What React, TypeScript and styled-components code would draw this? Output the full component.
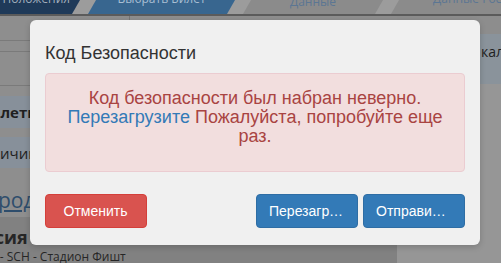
import React from "react";
import styled, { createGlobalStyle, css } from "styled-components";

const GlobalStyle = createGlobalStyle`
  html, body { margin: 0; padding: 0; }
  body {
    width: 501px;
    height: 263px;
    overflow: hidden;
    font-family: "Open Sans", "Liberation Sans", Arial, sans-serif;
  }
  * { box-sizing: border-box; }
`;

const Page = styled.div`
  position: relative;
  width: 501px;
  height: 263px;
  overflow: hidden;
  background: #8e8e8e;
`;

/* the site is wider than the window: its frame begins left of the viewport */
const SiteFrame = styled.div`
  width: 600px;
  height: 100%;
  margin-left: -40px;
  display: flex;
  flex-direction: column;
`;

const Navbar = styled.nav`
  flex: none;
  height: 16px;
  display: flex;
  background: #9c9c9c;
  border-bottom: 2px solid #5b5b5b;
  overflow: hidden;
`;

type NavTone = "navy" | "blue" | "idle";

const toneBg: Record<NavTone, string> = {
  navy: "#1f3a59",
  blue: "#38668f",
  idle: "#8b8b8b",
};
const toneFg: Record<NavTone, string> = {
  navy: "#a3afbd",
  blue: "#a9bfd3",
  idle: "#5b7693",
};

const NavItem = styled.div<{
  $tone: NavTone;
  $w: number;
  $justify?: string;
  $pad?: string;
  $drop?: number;
}>`
  flex: none;
  width: ${(p) => p.$w}px;
  height: 14px;
  margin-right: 8px;
  display: flex;
  align-items: flex-end;
  justify-content: ${(p) => p.$justify || "center"};
  padding: ${(p) => p.$pad || "0"};
  padding-bottom: ${(p) => 7 - (p.$drop || 0)}px;
  background: ${(p) => toneBg[p.$tone]};
  color: ${(p) => toneFg[p.$tone]};
  clip-path: polygon(8px 0, 100% 0, calc(100% - 8px) 100%, 0 100%);
  font-size: 12px;
  line-height: 16px;
  white-space: nowrap;
`;

const Body = styled.div`
  flex: 1;
  display: flex;
  min-height: 0;
`;

const Main = styled.div`
  flex: none;
  width: 437px;
  display: flex;
  flex-direction: column;
`;

const TableRow = styled.div<{ $h: number }>`
  flex: none;
  height: ${(p) => p.$h}px;
  border-bottom: 1px solid #7a7a7a;
  display: flex;
`;

const TableCell = styled.div`
  width: 170px;
  border-right: 1px solid #767676;
`;

const InfoPanel = styled.div<{ $h: number; $mt: number; $bold?: boolean; $indent: number }>`
  flex: none;
  height: ${(p) => p.$h}px;
  margin-top: ${(p) => p.$mt}px;
  background: #87909a;
  display: flex;
  align-items: center;
  padding-left: ${(p) => p.$indent}px;
  color: #1f1f1f;
  font-size: 15px;
  font-weight: ${(p) => (p.$bold ? 700 : 400)};
  white-space: nowrap;
`;

const LinkLine = styled.div`
  flex: none;
  height: 49px;
  display: flex;
  align-items: flex-end;
  padding: 0 0 4px 0;
`;

const PageLink = styled.a`
  color: #2e4d6c;
  font-size: 21px;
  line-height: 26px;
  text-decoration: underline;
  white-space: nowrap;
`;

const EventSection = styled.section`
  flex: 1;
  background: #818181;
  padding: 9px 0 0 0;
  display: flex;
  flex-direction: column;
`;

const Country = styled.div`
  font-size: 18px;
  font-weight: 700;
  line-height: 22px;
  color: #262626;
  padding-left: 3px;
  white-space: nowrap;
`;

const Venue = styled.div`
  font-size: 12px;
  line-height: 17px;
  color: #262626;
  padding-left: 7px;
  white-space: nowrap;
`;

const Aside = styled.div`
  flex: 1;
  display: flex;
  flex-direction: column;
  background: #969696;
`;

const AsideTop = styled.div`
  height: 18px;
  background: #8d8d8d;
`;

const AsidePanel = styled.div`
  height: 50px;
  background: #8a939b;
  padding: 8px 0 0 84px;
  font-size: 14px;
  line-height: 20px;
  color: #202020;
  white-space: nowrap;
`;

/* ---------- modal ---------- */

const Backdrop = styled.div`
  position: absolute;
  inset: 0;
  display: flex;
  align-items: flex-start;
  justify-content: flex-start;
  padding: 20px 0 0 30px;
`;

const Modal = styled.div`
  width: 450px;
  height: 225px;
  background: #f0f0f0;
  border-radius: 6px;
  box-shadow: 0 2px 6px rgba(0, 0, 0, 0.18);
  padding: 20px 15px 0;
  display: flex;
  flex-direction: column;
  font-family: "Liberation Sans", Arial, Helvetica, sans-serif;
`;

const Title = styled.h4`
  margin: 0 0 7px;
  font-size: 18px;
  line-height: 26px;
  font-weight: 400;
  color: #333333;
`;

const Alert = styled.div`
  background: #f2dede;
  border: 1px solid #ebccd1;
  border-radius: 4px;
  color: #a94442;
  padding: 15px 15px 25px;
  text-align: center;
  font-size: 18px;
  line-height: 19px;
`;

const AlertLink = styled.a`
  color: #337ab7;
  text-decoration: none;
`;

const Footer = styled.div`
  margin-top: 22px;
  display: flex;
  justify-content: space-between;
  align-items: center;
`;

const ButtonGroup = styled.div`
  display: flex;
  gap: 5px;
`;

type BtnVariant = "danger" | "primary";

const variantStyles = {
  danger: css`
    background: #d9534f;
    border-color: #d43f3a;
  `,
  primary: css`
    background: #337ab7;
    border-color: #2e6da4;
  `,
};

const Button = styled.button<{ $variant: BtnVariant }>`
  width: 102px;
  height: 34px;
  padding: 6px 13px 6px 12px;
  border: 1px solid transparent;
  border-radius: 4px;
  color: #ffffff;
  font-family: "Liberation Sans", Arial, Helvetica, sans-serif;
  font-size: 14px;
  line-height: 20px;
  text-align: center;
  white-space: nowrap;
  overflow: hidden;
  text-overflow: ellipsis;
  cursor: pointer;
  ${(p) => variantStyles[p.$variant]}
`;

export default function App() {
  return (
    <>
      <GlobalStyle />
      <Page>
        <SiteFrame>
          <Navbar>
            <NavItem $tone="navy" $w={120} $justify="flex-end" $pad="0 10px 0 0">
              Правила и Положения
            </NavItem>
            <NavItem $tone="blue" $w={147}>
              Выбрать Билет
            </NavItem>
            <NavItem $tone="idle" $w={140} $drop={3}>
              Данные
            </NavItem>
            <NavItem $tone="idle" $w={150} $justify="flex-start" $pad="0 0 0 42px">
              Данные Гостей
            </NavItem>
          </Navbar>
          <Body>
            <Main>
              <TableRow $h={25}>
                <TableCell />
              </TableRow>
              <TableRow $h={11} />
              <TableRow $h={34} />
              <InfoPanel $h={32} $mt={10} $bold $indent={20}>
                Билеты
              </InfoPanel>
              <InfoPanel $h={31} $mt={9} $indent={0}>
                В наличии
              </InfoPanel>
              <LinkLine>
                <PageLink>к городу</PageLink>
              </LinkLine>
              <EventSection>
                <Country>Россия</Country>
                <Venue>Сочи - SCH - Стадион Фишт</Venue>
              </EventSection>
            </Main>
            <Aside>
              <AsideTop />
              <AsidePanel>калужская</AsidePanel>
            </Aside>
          </Body>
        </SiteFrame>

        <Backdrop>
          <Modal role="dialog">
            <Title>Код Безопасности</Title>
            <Alert>
              Код безопасности был набран неверно.
              <br />
              <AlertLink href="#">Перезагрузите</AlertLink> Пожалуйста, попробуйте еще раз.
            </Alert>
            <Footer>
              <Button $variant="danger">Отменить</Button>
              <ButtonGroup>
                <Button $variant="primary">Перезагрузить</Button>
                <Button $variant="primary">Отправить код</Button>
              </ButtonGroup>
            </Footer>
          </Modal>
        </Backdrop>
      </Page>
    </>
  );
}
